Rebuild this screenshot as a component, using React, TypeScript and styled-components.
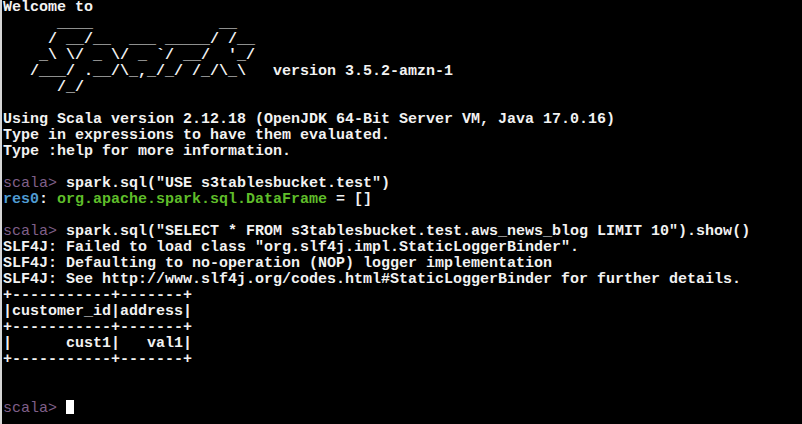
import React from "react";
import styled, { createGlobalStyle } from "styled-components";

const Global = createGlobalStyle`
  html, body { margin: 0; padding: 0; background: #000; }
  #root { width: 802px; height: 424px; }
`;

const Window = styled.div`
  display: flex;
  width: 802px;
  height: 424px;
  background: #000;
  overflow: hidden;
`;

const Edge = styled.div`
  width: 2px;
  flex: none;
  background: #d6d6d6;
`;

const Screen = styled.div`
  flex: 1;
  display: flex;
  flex-direction: column;
  padding: 0 0 0 1px;
  font-family: "Liberation Mono", "Courier New", monospace;
  font-weight: bold;
  font-size: 15px;
  line-height: 16px;
  color: #f2f2f2;
`;

const Line = styled.div`
  white-space: pre;
  height: 16px;
`;

const Prompt = styled.span`
  color: #7f5f88;
  font-weight: normal;
`;

const ResName = styled.span`
  color: #4f9bd2;
`;

const TypeName = styled.span`
  color: #5fbd2a;
`;

const Cursor = styled.span`
  display: inline-block;
  width: 8px;
  height: 14px;
  background: #fff;
  vertical-align: -2px;
`;

const lines: React.ReactNode[] = [
  "Welcome to",
  "      ____              __",
  "     / __/__  ___ _____/ /__",
  "    _\\ \\/ _ \\/ _ `/ __/  '_/",
  "   /___/ .__/\\_,_/_/ /_/\\_\\   version 3.5.2-amzn-1",
  "      /_/",
  "",
  "Using Scala version 2.12.18 (OpenJDK 64-Bit Server VM, Java 17.0.16)",
  "Type in expressions to have them evaluated.",
  "Type :help for more information.",
  "",
  <><Prompt>scala&gt;</Prompt> spark.sql("USE s3tablesbucket.test")</>,
  <><ResName>res0</ResName>: <TypeName>org.apache.spark.sql.DataFrame</TypeName> = []</>,
  "",
  <><Prompt>scala&gt;</Prompt> spark.sql("SELECT * FROM s3tablesbucket.test.aws_news_blog LIMIT 10").show()</>,
  "SLF4J: Failed to load class \"org.slf4j.impl.StaticLoggerBinder\".",
  "SLF4J: Defaulting to no-operation (NOP) logger implementation",
  "SLF4J: See http://www.slf4j.org/codes.html#StaticLoggerBinder for further details.",
  "+-----------+-------+",
  "|customer_id|address|",
  "+-----------+-------+",
  "|      cust1|   val1|",
  "+-----------+-------+",
  "",
  "",
  <><Prompt>scala&gt;</Prompt> <Cursor /></>,
];

export default function App() {
  return (
    <>
      <Global />
      <Window>
        <Edge />
        <Screen>
          {lines.map((l, i) => (
            <Line key={i}>{l}</Line>
          ))}
        </Screen>
      </Window>
    </>
  );
}
